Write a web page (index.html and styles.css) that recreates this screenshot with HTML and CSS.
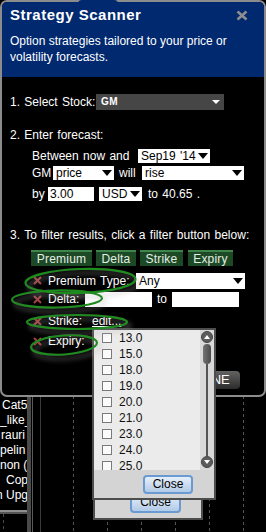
FILE: index.html
```html
<!DOCTYPE html>
<html>
<head>
<meta charset="utf-8">
<link rel="stylesheet" href="styles.css">
</head>
<body>
<div class="screen">
  <div class="app">
    <div class="app-names">
      <div class="app-name pad2">Cat5</div>
      <div class="app-name">_like_</div>
      <div class="app-name pad1">rauri</div>
      <div class="app-name">pelin</div>
      <div class="app-name">non (</div>
      <div class="app-name pad6">Cop</div>
      <div class="app-name neg">n Upg</div>
      <div class="app-hbar"></div>
      <div class="app-dash"></div>
    </div>
    <div class="app-bar"></div>
    <div class="app-line"></div>
    <div class="app-line dim"></div>
    <div class="app-col"></div>
    <div class="app-col"></div>
    <div class="app-col"></div>
    <div class="app-col"></div>
    <div class="app-col"></div>
    <div class="app-col"></div>
  </div>

  <div class="panel">
    <div class="notch"></div>
    <div class="header">
      <div class="header-top">
        <div class="title">Strategy Scanner</div>
        <svg class="close-x" width="12" height="11" viewBox="0 0 12 11"><path d="M1.5 1.5 L10.5 9.5 M10.5 1.5 L1.5 9.5" stroke="#8e8e8e" stroke-width="2.6" fill="none"/></svg>
      </div>
      <div class="subtitle">Option strategies tailored to your price or<br>volatility forecasts.</div>
    </div>
    <div class="body">
      <div class="row r1">
        <span class="lbl w86">1. Select Stock:</span>
        <span class="sel dark w128"><b class="gm">GM</b><i class="arr"></i></span>
      </div>
      <div class="row text-row r2">2. Enter forecast:</div>
      <div class="row ind r3">
        <span class="lbl w106">Between now and</span>
        <span class="sel w72">Sep19 '14<i class="arr"></i></span>
      </div>
      <div class="row ind r4">
        <span class="lbl w21">GM</span>
        <span class="sel w61">price<i class="arr"></i></span>
        <span class="lbl w28 pl5">will</span>
        <span class="sel w102">rise<i class="arr"></i></span>
      </div>
      <div class="row ind r5">
        <span class="lbl w16">by</span>
        <span class="inp w46">3.00</span>
        <span class="sel w43 ml5">USD<i class="arr"></i></span>
        <span class="lbl ml6">to 40.65 .</span>
      </div>
      <div class="row text-row r6">3. To filter results, click a filter button below:</div>
      <div class="row btns">
        <span class="fbtn w61">Premium</span>
        <span class="fbtn w40">Delta</span>
        <span class="fbtn w43">Strike</span>
        <span class="fbtn w45 ml5">Expiry</span>
      </div>
      <div class="row frow f1">
        <svg class="xm" width="9" height="9" viewBox="0 0 9 9"><path d="M1 1 L8 8 M8 1 L1 8" stroke="#a33f3f" stroke-width="2" fill="none"/></svg>
        <span class="lbl w88">Premium Type:</span>
        <span class="sel tall w109">Any<i class="arr"></i></span>
      </div>
      <div class="row frow f2">
        <svg class="xm" width="9" height="9" viewBox="0 0 9 9"><path d="M1 1 L8 8 M8 1 L1 8" stroke="#a33f3f" stroke-width="2" fill="none"/></svg>
        <span class="lbl w37">Delta:</span>
        <span class="inp tall w67"></span>
        <span class="lbl to">to</span>
        <span class="inp tall w67"></span>
      </div>
      <div class="row frow f3">
        <svg class="xm" width="9" height="9" viewBox="0 0 9 9"><path d="M1 1 L8 8 M8 1 L1 8" stroke="#a33f3f" stroke-width="2" fill="none"/></svg>
        <span class="lbl w44">Strike:</span>
        <span class="link">edit...</span>
      </div>
      <div class="row frow f4">
        <svg class="xm" width="9" height="9" viewBox="0 0 9 9"><path d="M1 1 L8 8 M8 1 L1 8" stroke="#a33f3f" stroke-width="2" fill="none"/></svg>
        <span class="lbl">Expiry:</span>
      </div>
      <div class="row done-row">
        <span class="done">DONE</span>
      </div>
    </div>
  </div>

  <div class="popup back">
    <span class="cbtn back-btn">Close</span>
  </div>

  <div class="popup front">
    <div class="list-area">
      <div class="list">
        <div class="item"><i class="cb"></i>13.0</div>
        <div class="item"><i class="cb"></i>15.0</div>
        <div class="item"><i class="cb"></i>18.0</div>
        <div class="item"><i class="cb"></i>19.0</div>
        <div class="item"><i class="cb"></i>20.0</div>
        <div class="item"><i class="cb"></i>21.0</div>
        <div class="item"><i class="cb"></i>23.0</div>
        <div class="item"><i class="cb"></i>24.0</div>
        <div class="item"><i class="cb"></i>25.0</div>
      </div>
      <div class="scroll">
        <span class="sarrow up"><i></i></span>
        <span class="thumb"></span>
        <span class="track"></span>
        <span class="sarrow down"><i></i></span>
      </div>
    </div>
    <div class="foot">
      <span class="cbtn">Close</span>
    </div>
  </div>

  <svg class="marks" width="266" height="400" viewBox="0 0 266 400">
    <defs>
      <filter id="sh" x="-20%" y="-50%" width="140%" height="200%">
        <feDropShadow dx="3" dy="4" stdDeviation="2.5" flood-color="#b0b0b0" flood-opacity="0.5"/>
      </filter>
    </defs>
    <g fill="none" stroke="#1f8c1f" stroke-width="2.2" filter="url(#sh)">
      <ellipse cx="80.5" cy="281" rx="55" ry="12" transform="rotate(-2 80.5 281)"/>
      <ellipse cx="57" cy="299" rx="45" ry="8.5" transform="rotate(-1 57 299)"/>
      <ellipse cx="77" cy="322" rx="50" ry="7"/>
      <ellipse cx="64" cy="345" rx="33" ry="9.5" transform="rotate(-4 64 345)"/>
    </g>
  </svg>
</div>
</body>
</html>
```

FILE: styles.css
```css
* { box-sizing: border-box; }
html, body { margin: 0; padding: 0; }
body {
  background: #000;
  font-family: "Liberation Sans", Arial, sans-serif;
  font-size: 12px;
  color: #fff;
}
.screen {
  position: relative;
  width: 266px;
  height: 532px;
  overflow: hidden;
  background: #000;
}

/* background application */
.app { display: flex; height: 532px; }
.app-names {
  width: 27px;
  flex: none;
  padding-top: 398px;
  overflow: hidden;
  display: flex;
  flex-direction: column;
}
.app-name {
  height: 15px;
  line-height: 15px;
  white-space: nowrap;
  font-size: 12px;
  color: #fff;
}
.pad1 { padding-left: 1px; }
.pad2 { padding-left: 2px; }
.pad6 { padding-left: 6px; }
.neg { margin-left: -4px; }
.app-hbar {
  margin-top: 7px;
  height: 4px;
  width: 27px;
  flex: none;
  border-top: 2px solid #8f8f8f;
  background: #555;
}
.app-dash {
  flex: 1;
  margin-left: 3px;
  width: 1px;
  background: repeating-linear-gradient(to bottom, #4a4a4a 0 3px, transparent 3px 6px);
}
.app-bar { width: 4px; flex: none; background: #4a4a4a; margin-right: 1px; }
.app-line { width: 1px; flex: none; background: #5a5a5a; margin-right: 7px; }
.app-line.dim { background: #3a3a3a; margin-right: 32px; }
.app-col {
  width: 34px;
  flex: none;
  background-image: repeating-linear-gradient(to bottom, #555 0 3px, transparent 3px 6px);
  background-size: 1px 100%;
  background-repeat: no-repeat;
}

/* dialog */
.panel {
  position: absolute;
  top: 0;
  left: 0;
  width: 266px;
  height: 397px;
  border: 2px solid #8c8c8c;
  border-radius: 7px;
  background: #000;
  display: flex;
  flex-direction: column;
}
.notch {
  position: absolute;
  top: -2px;
  left: 76px;
  width: 40px;
  height: 4px;
  background: #00296f;
  border-radius: 4px 4px 0 0;
}
.header {
  height: 75px;
  flex: none;
  background: #00296f;
  border-radius: 5px 5px 0 0;
  padding: 4px 16px 0 8px;
}
.header-top {
  display: flex;
  justify-content: space-between;
  align-items: center;
  height: 18px;
}
.title {
  font-size: 15px;
  font-weight: bold;
  letter-spacing: 0.5px;
  line-height: 18px;
}
.close-x { display: block; margin-top: 1px; }
.subtitle {
  margin-top: 9px;
  font-size: 12px;
  line-height: 16px;
}

.body {
  padding-left: 8px;
  display: flex;
  flex-direction: column;
  word-spacing: 1px;
}
.row { display: flex; align-items: center; flex: none; white-space: nowrap; }
.text-row { height: 16px; line-height: 16px; }
.ind { padding-left: 22px; }
.lbl { flex: none; }
.w16 { width: 16px; } .w21 { width: 21px; } .w28 { width: 28px; }
.w37 { width: 37px; } .w40 { width: 40px; } .w43 { width: 43px; }
.w44 { width: 44px; } .w45 { width: 45px; } .w46 { width: 46px; }
.w61 { width: 61px; } .w67 { width: 67px; } .w72 { width: 72px; }
.w86 { width: 86px; } .w88 { width: 88px; } .w102 { width: 102px; }
.w106 { width: 106px; } .w109 { width: 109px; } .w128 { width: 128px; }
.pl5 { padding-left: 5px; }
.ml5 { margin-left: 5px; }
.ml6 { margin-left: 6px; }

.r1 { margin-top: 17px; height: 16px; }
.r2 { margin-top: 17px; }
.r3 { margin-top: 5px; height: 15px; }
.r4 { margin-top: 2px; height: 15px; }
.r5 { margin-top: 6px; height: 15px; }
.r6 { margin-top: 26px; }

.sel {
  display: flex;
  align-items: center;
  flex: none;
  height: 14px;
  line-height: 14px;
  background: #fff;
  color: #000;
  padding: 0 2px 0 3px;
}
.sel.tall { height: 16px; line-height: 16px; }
.sel .arr {
  margin-left: auto;
  width: 0;
  height: 0;
  border-left: 5px solid transparent;
  border-right: 5px solid transparent;
  border-top: 6px solid #000;
}
.sel.dark {
  height: 16px;
  background: #464646;
  color: #fff;
  padding: 0 4px 0 5px;
}
.sel.dark .arr {
  border-left-width: 4px;
  border-right-width: 4px;
  border-top: 4px solid #fff;
}
.gm { font-size: 10px; font-weight: bold; letter-spacing: 0.5px; }
.inp {
  flex: none;
  height: 14px;
  line-height: 14px;
  background: #fff;
  color: #000;
  padding-left: 2px;
}
.inp.tall { height: 15px; }
.to { margin: 0 5px; width: 10px; }

.btns { margin-top: 7px; height: 16px; padding-left: 21px; gap: 4px; }
.btns .ml5 { margin-left: 1px; }
.fbtn {
  flex: none;
  height: 16px;
  line-height: 14px;
  text-align: center;
  background: #1d4a26;
  border-top: 2px solid #3d8548;
  color: #e4eee4;
  font-size: 12px;
  letter-spacing: 0.2px;
}

.frow { height: 16px; padding-left: 23px; }
.f1 { margin-top: 6px; height: 17px; }
.f2 { margin-top: 2px; }
.f3 { margin-top: 6px; }
.f4 { margin-top: 4px; }
.xm { display: block; flex: none; margin-right: 6px; }
.link { text-decoration: underline; }

.done-row { margin-top: 22px; height: 18px; justify-content: flex-end; padding-right: 24px; }
.done {
  width: 58px;
  height: 18px;
  line-height: 18px;
  text-align: center;
  font-size: 13px;
  color: #fff;
  border-radius: 4px;
  background: linear-gradient(#626262, #2c2c2c);
}

/* popups */
.popup {
  position: absolute;
  border: 2px solid #4d4d4d;
  background: #d4d4d4;
}
.back {
  left: 93px;
  top: 400px;
  width: 110px;
  height: 120px;
  display: flex;
  flex-direction: column;
  justify-content: flex-end;
  padding: 0 0 5px 35px;
}
.front {
  left: 92px;
  top: 328px;
  width: 124px;
  height: 172px;
  display: flex;
  flex-direction: column;
}
.cbtn {
  display: block;
  width: 50px;
  height: 19px;
  line-height: 15px;
  text-align: center;
  color: #000;
  font-size: 12px;
  border: 2px solid #6a9ad2;
  border-radius: 4px;
  background: linear-gradient(#e6effa, #b2cae6);
}
.back-btn { width: 51px; height: 20px; }
.list-area { display: flex; height: 140px; flex: none; }
.list {
  flex: 1;
  background: #ebebeb;
  overflow: hidden;
  padding-left: 8px;
}
.item {
  height: 16px;
  display: flex;
  align-items: center;
  color: #111;
  font-size: 12px;
}
.cb {
  width: 10px;
  height: 10px;
  border: 1px solid #7a7a7a;
  background: #fbfbfb;
  margin-right: 7px;
  flex: none;
}
.scroll {
  width: 14px;
  flex: none;
  background: #d9d9d9;
  display: flex;
  flex-direction: column;
  align-items: center;
  padding: 1px 0 2px;
}
.sarrow {
  width: 12px;
  height: 12px;
  border-radius: 50%;
  background: #5c5c5c;
  border: 1px solid #454545;
  display: flex;
  align-items: center;
  justify-content: center;
  flex: none;
}
.sarrow i {
  width: 0;
  height: 0;
  border-left: 3px solid transparent;
  border-right: 3px solid transparent;
}
.sarrow.up i { border-bottom: 4px solid #fff; }
.sarrow.down i { border-top: 4px solid #fff; }
.thumb {
  margin-top: 1px;
  width: 8px;
  height: 20px;
  border-radius: 4px;
  background: linear-gradient(to right, #747474, #4a4a4a);
  flex: none;
}
.track { flex: 1; width: 2px; background: #555; }
.foot {
  flex: 1;
  background: #d4d4d4;
  padding: 5px 0 0 49px;
}

.marks {
  position: absolute;
  top: 0;
  left: 0;
  pointer-events: none;
}
```
